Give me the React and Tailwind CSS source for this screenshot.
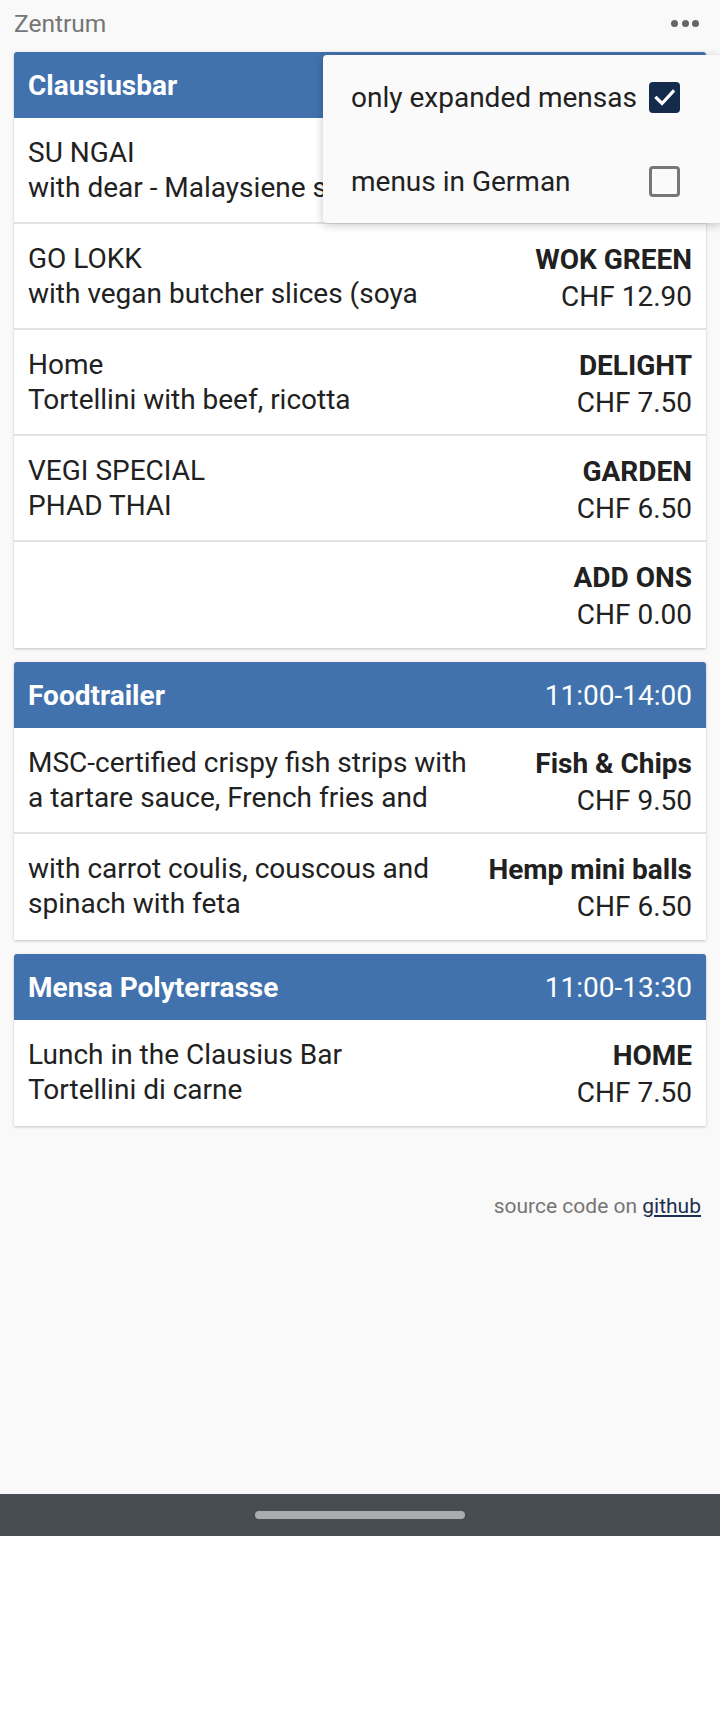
import React, { useState } from 'react';

const mensas = [
  {
    name: 'Clausiusbar',
    hours: '11:00-19:00',
    meals: [
      { title: 'SU NGAI', desc: 'with dear - Malaysiene style curry and jasmine rice', label: 'STREET', price: 'CHF 12.90' },
      { title: 'GO LOKK', desc: 'with vegan butcher slices (soya protein-marinade), pak choi and rice', label: 'WOK GREEN', price: 'CHF 12.90' },
      { title: 'Home', desc: 'Tortellini with beef, ricotta', label: 'DELIGHT', price: 'CHF 7.50' },
      { title: 'VEGI SPECIAL', desc: 'PHAD THAI', label: 'GARDEN', price: 'CHF 6.50' },
      { title: '', desc: '', label: 'ADD ONS', price: 'CHF 0.00' },
    ],
  },
  {
    name: 'Foodtrailer',
    hours: '11:00-14:00',
    meals: [
      { title: '', desc: 'MSC-certified crispy fish strips with a tartare sauce, French fries and vegetables', label: 'Fish & Chips', price: 'CHF 9.50' },
      { title: '', desc: 'with carrot coulis, couscous and spinach with feta', label: 'Hemp mini balls', price: 'CHF 6.50' },
    ],
  },
  {
    name: 'Mensa Polyterrasse',
    hours: '11:00-13:30',
    meals: [
      { title: 'Lunch in the Clausius Bar', desc: 'Tortellini di carne', label: 'HOME', price: 'CHF 7.50' },
    ],
  },
];

const Checkbox = ({ checked, onClick }) =>
  checked ? (
    <button onClick={onClick} className="w-[31px] h-[31px] rounded-[4px] bg-[#142b4c] flex items-center justify-center">
      <svg width="31" height="31" viewBox="0 0 31 31" fill="none">
        <polyline points="7.5,16 13,21.5 24,9.5" stroke="#ffffff" strokeWidth="3.2" strokeLinecap="square" />
      </svg>
    </button>
  ) : (
    <button onClick={onClick} className="w-[31px] h-[31px] rounded-[4px] border-[3px] border-[#777777] bg-transparent" />
  );

const MealRow = ({ meal, last }) => (
  <div className={`flex h-[106px] px-[14px] pt-[17px] ${last ? '' : 'border-b-2 border-[#e3e3e3]'}`}>
    <div className="w-[448px] shrink-0 max-h-[70px] overflow-hidden text-[28px] leading-[35px] text-[#212121]">
      {meal.title && <div>{meal.title}</div>}
      {meal.desc && <div>{meal.desc}</div>}
    </div>
    <div className="flex-1 text-right text-[28px] leading-[37px] text-[#212121]">
      <div className="font-bold whitespace-nowrap">{meal.label}</div>
      <div className="whitespace-nowrap">{meal.price}</div>
    </div>
  </div>
);

const MensaCard = ({ mensa }) => (
  <div className="bg-white rounded-t-[3px] shadow-[0_1px_3px_rgba(0,0,0,0.22)]">
    <div className="h-[66px] bg-[#4172ae] rounded-t-[3px] px-[14px] pt-[16px] flex justify-between items-baseline text-white">
      <span className="text-[28px] leading-[35px] font-bold">{mensa.name}</span>
      <span className="text-[28px] leading-[35px]">{mensa.hours}</span>
    </div>
    {mensa.meals.map((meal, i) => (
      <MealRow key={i} meal={meal} last={i === mensa.meals.length - 1} />
    ))}
  </div>
);

export default function App() {
  const [expandedOnly, setExpandedOnly] = useState(true);
  const [german, setGerman] = useState(false);

  return (
    <div className="relative w-[720px] h-[1712px] bg-white font-['Roboto',sans-serif] overflow-hidden">
      <div className="h-[1494px] bg-[#f9f9f9]">
        {/* Top bar */}
        <div className="h-[52px] px-[14px] pt-[9px] flex justify-between items-start">
          <span className="text-[24.5px] leading-[29px] text-[#757575]">Zentrum</span>
          <div className="h-[29px] mr-[7px] flex items-center gap-[3.5px]">
            <span className="w-[7px] h-[7px] rounded-full bg-[#666666]" />
            <span className="w-[7px] h-[7px] rounded-full bg-[#666666]" />
            <span className="w-[7px] h-[7px] rounded-full bg-[#666666]" />
          </div>
        </div>

        {/* Mensa list */}
        <div className="px-[14px] flex flex-col gap-[14px]">
          {mensas.map((m) => (
            <MensaCard key={m.name} mensa={m} />
          ))}
        </div>

        {/* Footer */}
        <div className="mt-[64px] pr-[19px] text-right text-[21px] leading-[32px] text-[#757575]">
          source code on{' '}
          <a href="#" className="text-[#1b2f52] underline">github</a>
        </div>
      </div>

      {/* Navigation bar */}
      <div className="h-[42px] bg-[#474d52] flex items-center justify-center">
        <div className="w-[210px] h-[8px] rounded-full bg-[#a9adb0]" />
      </div>

      {/* Settings menu */}
      <div className="absolute top-[55px] left-[323px] bg-[#fafafa] rounded-[4px] shadow-[0_2px_10px_rgba(0,0,0,0.22)] pl-[28px] pr-[41px]">
        <div className="h-[84px] flex items-center gap-[12px] justify-between">
          <span className="text-[28px] leading-[35px] text-[#212121] whitespace-nowrap">only expanded mensas</span>
          <Checkbox checked={expandedOnly} onClick={() => setExpandedOnly(!expandedOnly)} />
        </div>
        <div className="h-[84px] flex items-center gap-[12px] justify-between">
          <span className="text-[28px] leading-[35px] text-[#212121] whitespace-nowrap">menus in German</span>
          <Checkbox checked={german} onClick={() => setGerman(!german)} />
        </div>
      </div>
    </div>
  );
}
